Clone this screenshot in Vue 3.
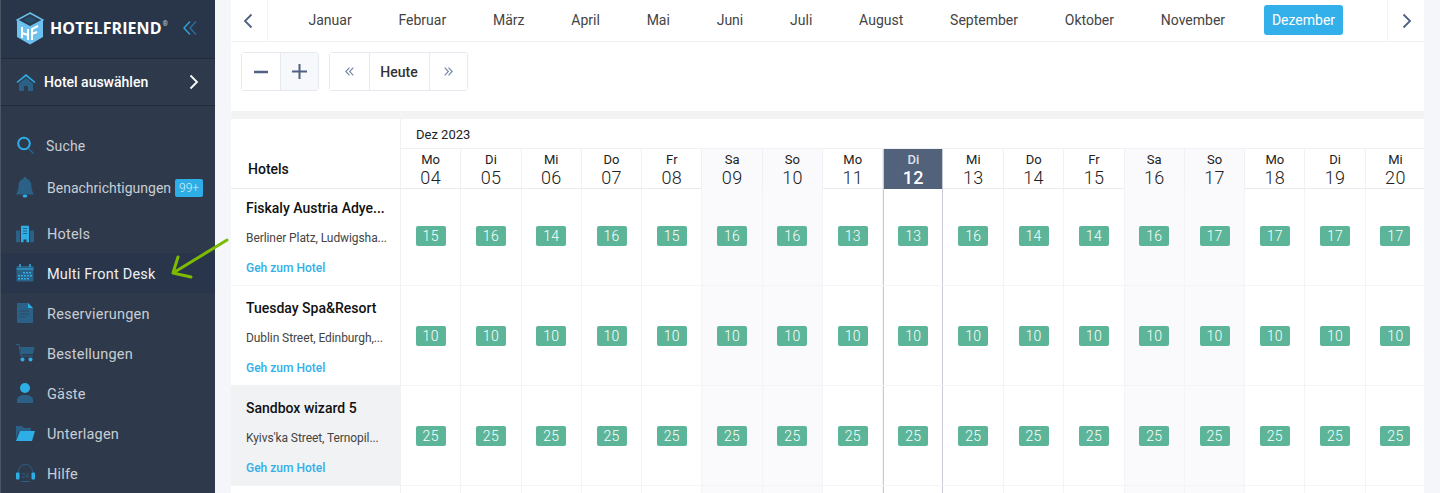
<script setup>
const months = ['Januar','Februar','März','April','Mai','Juni','Juli','August','September','Oktober','November','Dezember']
const days = [
  ['Mo','04'],['Di','05'],['Mi','06'],['Do','07'],['Fr','08'],['Sa','09'],['So','10'],['Mo','11'],['Di','12'],
  ['Mi','13'],['Do','14'],['Fr','15'],['Sa','16'],['So','17'],['Mo','18'],['Di','19'],['Mi','20']
]
const hotels = [
  { name:'Fiskaly Austria Adye...', addr:'Berliner Platz, Ludwigsha...', vals:[15,16,14,16,15,16,16,13,13,16,14,14,16,17,17,17,17] },
  { name:'Tuesday Spa&Resort', addr:'Dublin Street, Edinburgh,...', vals:Array(17).fill(10) },
  { name:'Sandbox wizard 5', addr:"Kyivs'ka Street, Ternopil...", active:true, vals:Array(17).fill(25) }
]
const dayClass = (i) => ({ weekend: i===5||i===6||i===12||i===13, today: i===8 })
const menu = ['Reservierungen','Bestellungen','Gäste','Unterlagen','Hilfe']
</script>

<template>
  <div class="page">
    <aside class="side">
      <div class="brand">
        <svg class="logo" width="28" height="33" viewBox="0 0 28 33">
          <path d="M14 1 27 8v17l-13 7.500L1 25V8z" fill="#6cc1ee"/>
          <path d="M14 1 27 8 14 15 1 8z" fill="#2c3b4f" stroke="#6cc1ee" stroke-width="1.500"/>
          <path d="M14 4.500 21 8l-7 3.500L7 8z" fill="#24506f"/>
          <path d="M6 15v11M12 17v11M6 21l6 2M16 28V17l6-3M16 22l5-2" fill="none" stroke="#fff" stroke-width="2"/>
        </svg>
        <span class="brand-name">HOTELFRIEND</span><span class="reg">®</span>
        <svg class="collapse" width="14" height="14" viewBox="0 0 14 14" fill="none">
          <path d="M7 .5 1 7l6 6.500" stroke="#2ea6dd" stroke-width="1.400"/>
          <path d="M13 .5 7 7l6 6.500" stroke="#2a6f9c" stroke-width="1.400"/>
        </svg>
      </div>
      <div class="select">
        <svg class="ic" width="20" height="18" viewBox="0 0 20 18">
          <path d="M0.500 9 10 1l9.500 8-1 1L10 3.200 1.500 10z" fill="#2eaee6"/>
          <path d="M3 10.500 10 4.700l7 5.800V18h-5v-5H8v5H3z" fill="#2b6187"/>
        </svg>
        <span class="select-t">Hotel auswählen</span>
        <svg class="chev" width="10" height="16" viewBox="0 0 10 16" fill="none"><path d="M1.500 1.500 8 8l-6.500 6.500" stroke="#fff" stroke-width="1.800"/></svg>
      </div>
      <nav class="nav">
        <div class="item search">
          <svg class="ic" width="20" height="20" viewBox="0 0 20 20" fill="none"><circle cx="8" cy="7.500" r="5.800" stroke="#2eaee6" stroke-width="2"/><path d="M12.500 12.500 17.500 17.500" stroke="#2b6187" stroke-width="1.600"/></svg>
          <span class="lbl suche">Suche</span>
        </div>
        <div class="item bell">
          <svg class="ic" width="20" height="24" viewBox="1 0 20 24"><path d="M10 1c1 0 1.500.7 1.600 1.700C15 3.600 16.500 6.500 16.500 10c0 4 1 6 2.500 8.500H1C2.500 16 3.500 14 3.500 10c0-3.500 1.500-6.400 4.900-7.300C8.500 1.700 9 1 10 1z" fill="#2b6187"/><ellipse cx="10" cy="20" rx="2.400" ry="1.500" fill="#2eaee6"/></svg>
          <span class="lbl small">Benachrichtigungen</span>
          <span class="badge">99+</span>
        </div>
        <div class="item hotels">
          <svg class="ic" width="18" height="17" viewBox="0 0 18 17"><path d="M0 5h4v12H0zM14 5h4v12h-4z" fill="#2b6187"/><path d="M5 0h8v17h-2.500v-3h-3v3H5z" fill="#2eaee6"/><path d="M7 3h4M7 5.500h4M7 8h4" stroke="#2c5f85" stroke-width="1"/></svg>
          <span class="lbl">Hotels</span>
        </div>
        <div class="item on">
          <svg class="ic" width="18" height="18" viewBox="0 0 18 18"><rect x="0.500" y="2" width="17" height="15.500" rx="1" fill="#2b6187"/><path d="M0.500 5h17" stroke="#2eaee6"/><path d="M4 0v3M14 0v3" stroke="#2eaee6" stroke-width="1.500"/><path d="M7 8h2v1.600H7zM10 8h2v1.600h-2zM13 8h2v1.600h-2zM2 11h2v1.600H2zM5 11h2v1.600H5zM8 11h2v1.600H8zM11 11h2v1.600h-2zM14 11h2v1.600h-2zM2 14h2v1.600H2zM5 14h2v1.600H5zM8 14h2v1.600H8zM11 14h2v1.600h-2z" fill="#2eaee6"/></svg>
          <span class="lbl">Multi Front Desk</span>
        </div>
        <div v-for="(m,i) in menu" :key="m" class="item">
          <svg v-if="i===0" class="ic" width="18" height="20" viewBox="0 0 18 20"><path d="M1 0h11l5 5v14a1 1 0 0 1-1 1H2a1 1 0 0 1-1-1z" fill="#2b6187"/><path d="M12 0l5 5h-5z" fill="#2eaee6"/><path d="M3.500 8H13M3.500 11H13M3.500 14h6" stroke="#2c4a63" stroke-width="1"/></svg>
          <svg v-else-if="i===1" class="ic" width="19" height="18" viewBox="0 0 19 18"><path d="M0 .5h3L5 12h12" fill="none" stroke="#2b6187" stroke-width="1.200"/><path d="M4 3h14.500L17 10H5.200z" fill="#2b6187"/><circle cx="6.500" cy="15.500" r="2" fill="#2eaee6"/><circle cx="14.500" cy="15.500" r="2" fill="#2eaee6"/></svg>
          <svg v-else-if="i===2" class="ic" width="18" height="20" viewBox="0 0 18 20"><circle cx="9" cy="5" r="5" fill="#2eaee6"/><path d="M1 20v-3c0-3 3-5 8-5s8 2 8 5v3z" fill="#2b6187"/></svg>
          <svg v-else-if="i===3" class="ic" width="19" height="16" viewBox="0 0 19 16"><path d="M0 1h6l2 2h7v3H3L0 14z" fill="#2b6187"/><path d="M4 6h15l-3 10H0z" fill="#2eaee6"/></svg>
          <svg v-else class="ic" width="19" height="19" viewBox="0 0 19 19" fill="none"><path d="M2.500 9V8a7 7 0 0 1 14 0v1" stroke="#2b6187" stroke-width="1"/><rect x="0" y="9" width="3.500" height="7" rx="1" fill="#2eaee6"/><rect x="15.500" y="9" width="3.500" height="7" rx="1" fill="#2eaee6"/><path d="M5 18h9" stroke="#2b6187"/><text x="9.500" y="14.500" font-size="6.500" fill="#2b6187" text-anchor="middle" font-family="Roboto">24</text></svg>
          <span class="lbl">{{ m }}</span>
        </div>
      </nav>
    </aside>

    <main class="main">
      <div class="months">
        <div class="mnav"><svg width="10" height="16" viewBox="0 0 10 16" fill="none"><path d="M8.500 1.500 2 8l6.500 6.500" stroke="#4f6080" stroke-width="1.800"/></svg></div>
        <div class="mlist">
          <span v-for="m in months" :key="m" class="m" :class="{ cur: m==='Dezember' }">{{ m }}</span>
        </div>
        <div class="mnav right"><svg width="10" height="16" viewBox="0 0 10 16" fill="none"><path d="M1.500 1.500 8 8l-6.500 6.500" stroke="#4f6080" stroke-width="1.800"/></svg></div>
      </div>
      <div class="tools">
        <div class="grp">
          <button class="b sq"><svg width="14" height="14" viewBox="0 0 14 14"><path d="M0 7h14" stroke="#4f6080" stroke-width="2.500"/></svg></button>
          <button class="b sq plus"><svg width="15" height="15" viewBox="0 0 15 15"><path d="M0 7.500h15M7.500 0v15" stroke="#4f6080" stroke-width="2"/></svg></button>
        </div>
        <div class="grp">
          <button class="b arrow"><svg width="9" height="9" viewBox="0 0 9 9" fill="none"><path d="M4.500.7.800 4.500l3.700 3.800M8.300.7 4.600 4.500l3.700 3.800" stroke="#7083a3" stroke-width="1.100"/></svg></button>
          <button class="b today">Heute</button>
          <button class="b arrow"><svg width="9" height="9" viewBox="0 0 9 9" fill="none"><path d="M.7.700 4.400 4.500.7 8.300M4.500.7l3.700 3.800-3.700 3.800" stroke="#7083a3" stroke-width="1.100"/></svg></button>
        </div>
      </div>
      <div class="gap"></div>
      <div class="table">
        <div class="thead">
          <div class="th-h">Hotels</div>
          <div class="th-r">
            <div class="mon">Dez 2023</div>
            <div class="cols">
              <div v-for="(d,i) in days" :key="i" class="dh" :class="dayClass(i)">
                <span class="dw">{{ d[0] }}</span><span class="dn">{{ d[1] }}</span>
              </div>
            </div>
          </div>
        </div>
        <div v-for="h in hotels" :key="h.name" class="row">
          <div class="hc" :class="{ act: h.active }">
            <div class="hn">{{ h.name }}</div>
            <div class="ha">{{ h.addr }}</div>
            <div class="hl">Geh zum Hotel</div>
          </div>
          <div class="cols">
            <div v-for="(v,i) in h.vals" :key="i" class="cell" :class="dayClass(i)"><span class="chip">{{ v }}</span></div>
          </div>
        </div>
        <div class="row last">
          <div class="hc"></div>
          <div class="cols"><div v-for="(d,i) in days" :key="i" class="cell" :class="dayClass(i)"></div></div>
        </div>
      </div>
    </main>

    <svg class="arrow-note" width="62" height="42" viewBox="0 0 62 42" fill="none">
      <path d="M58 2 4 35M9 19 4 35l18 4" stroke="#7dbb00" stroke-width="3" stroke-linecap="round" stroke-linejoin="round"/>
    </svg>
  </div>
</template>

<style>
html, body { margin: 0; height: 100%; overflow: hidden; background: #f5f6fa; }
</style>

<style scoped>
.page { position: relative; display: flex; width: 1440px; height: 493px; overflow: hidden; background: #f5f6fa; font-family: Roboto, sans-serif; color: #222; }
.side { width: 215px; flex: none; background: #2e3a4c; border-left: 1px solid #4a5563; box-sizing: border-box; color: #c9cdd3; }
.brand { height: 59px; box-sizing: border-box; background: #29364a; border-bottom: 1px solid #202c3c; display: flex; align-items: center; padding-left: 15px; position: relative; }
.logo { margin-right: 6px; margin-top: -2px; }
.brand-name { font: 700 16px/1 "Open Sans", sans-serif; letter-spacing: .08px; color: #fff; margin-top: -2px; }
.reg { font-size: 7px; color: #c8ccd2; margin-top: -10px; margin-left: 1px; }
.collapse { position: absolute; left: 182px; top: 21px; }
.select { height: 47px; box-sizing: border-box; border-bottom: 1px solid #202c3c; display: flex; align-items: center; padding-left: 15px; position: relative; }
.select-t { margin-left: 8px; color: #fff; font-size: 14px; font-weight: 500; }
.chev { position: absolute; left: 188px; top: 15px; }
.nav { padding-top: 20px; }
.item { height: 40px; box-sizing: border-box; padding: 2px 0 0 15px; display: flex; align-items: center; position: relative; font-size: 14.500px; letter-spacing: .2px; }
.item .ic { position: absolute; left: 15px; top: 50%; transform: translateY(-50%); }
.lbl { margin-left: 31px; }
.lbl.small { font-size: 14px; letter-spacing: 0; }
.suche { margin-left: 30px; font-size: 14px; }
.item.search { padding-top: 0; }
.item.bell { height: 44px; padding-top: 0; }
.item.hotels { height: 43px; padding-top: 5px; }
.item.hotels .ic { top: calc(50% + 2px); }
.item.on { background: #29354a; color: #eef0f2; }
.badge { margin-left: 4px; width: 28px; text-align: center; background: #2eaee6; color: #d9f0fb; font-size: 12px; font-weight: 300; line-height: 18px; height: 18px; border-radius: 2px; letter-spacing: 0; }
.main { width: 1193px; margin-left: 16px; flex: none; background: #fff; }
.months { height: 42px; box-sizing: border-box; border-bottom: 1px solid #f0f1f4; display: flex; }
.mnav { width: 37px; flex: none; box-sizing: border-box; border-right: 1px solid #f3f4f6; display: flex; align-items: center; justify-content: center; padding-right: 2px; }
.mnav.right { border-right: 0; border-left: 1px solid #f3f4f6; padding: 0 0 0 2px; }
.mlist { flex: 1; display: flex; align-items: center; gap: 31.800px; padding: 0 0 1px 33px; min-width: 0; }
.m { font-size: 14px; color: #444; line-height: 30px; padding: 0 7.500px; flex: none; }
.m.cur { background: #33afe9; color: #fff; border-radius: 3px; }
.tools { height: 69px; box-sizing: border-box; padding: 10px 0 0 10px; display: flex; gap: 10px; align-items: flex-start; }
.grp { display: flex; height: 39px; box-sizing: border-box; border: 1px solid #e6e9f0; border-radius: 3px; }
.b { border: 0; background: #fff; padding: 0; display: flex; align-items: center; justify-content: center; font-family: Roboto, sans-serif; height: 37px; border-left: 1px solid #e6e9f0; }
.b:first-child { border-left: 0; }
.sq { width: 38px; }
.sq.plus { background: #f7f8fb; }
.arrow { width: 38.500px; }
.today { width: 60px; font-size: 14px; font-weight: 500; color: #333; }
.gap { height: 8px; background: #f3f3f4; }
.table { height: 374px; overflow: hidden; }
.thead { position: relative; z-index: 1; display: flex; height: 70px; box-sizing: border-box; border-bottom: 1px solid #e9eaee; background: #fff; }
.th-h { width: 170px; flex: none; box-sizing: border-box; border-right: 1px solid #f0f1f4; font-size: 14px; font-weight: 500; color: #111; padding: 42px 0 0 17px; line-height: 17px; }
.th-r { flex: 1; min-width: 0; overflow: hidden; height: 70px; }
.mon { height: 30px; box-sizing: border-box; border-bottom: 1px solid #f0f1f4; font-size: 13px; line-height: 31px; padding-left: 15px; color: #222; }
.cols { flex: 1; min-width: 0; overflow: hidden; display: grid; grid-template-columns: repeat(17, 60.300px); }
.th-r .cols { height: 40px; }
.dh { display: flex; flex-direction: column; align-items: center; box-sizing: border-box; border-right: 1px solid #f0f1f4; padding-top: 3px; }
.dw { font-size: 13px; line-height: 15px; color: #222; }
.dn { font-size: 18px; font-weight: 300; line-height: 20px; margin-top: 1px; letter-spacing: .3px; color: #222; }
.dh:not(.weekend):not(.today) { border-bottom: 1px solid #e9eaee; }
.dh.weekend { background: #fafafd; }
.dh.today { background: #52627b; border-left: 1px solid #c9cbd6; border-right: 1px solid #c9cbd6; }
.dh.today .dw { color: #dfe3e9; }
.dh.today .dn { color: #fff; font-weight: 500; }
.row { display: flex; height: 100px; box-sizing: border-box; border-bottom: 1px solid #f3f4f6; }
.thead + .row { margin-top: -3px; }
.row.last { height: 60px; border: 0; }
.hc { width: 170px; flex: none; box-sizing: border-box; border-right: 1px solid #f0f1f4; padding: 14px 0 0 15px; }
.hc.act { background: #f1f2f4; }
.hn { font-size: 14px; font-weight: 500; line-height: 16px; color: #111; }
.ha { font-size: 12px; line-height: 14px; margin-top: 15px; color: #444; letter-spacing: -.08px; }
.hl { font-size: 12px; font-weight: 500; line-height: 14px; margin-top: 16px; color: #33afe9; }
.cell { display: flex; align-items: center; justify-content: center; box-sizing: border-box; border-right: 1px solid #f3f4f6; }
.cell.weekend { background: #fafafd; }
.cell.today { border-left: 1px solid #c9cbd6; border-right: 1px solid #c9cbd6; }
.chip { width: 30px; height: 20px; border-radius: 2px; background: #5cb599; color: #fff; font-size: 14px; line-height: 20px; text-align: center; font-weight: 300; letter-spacing: .3px; }
.arrow-note { position: absolute; left: 169px; top: 238px; }
</style>
